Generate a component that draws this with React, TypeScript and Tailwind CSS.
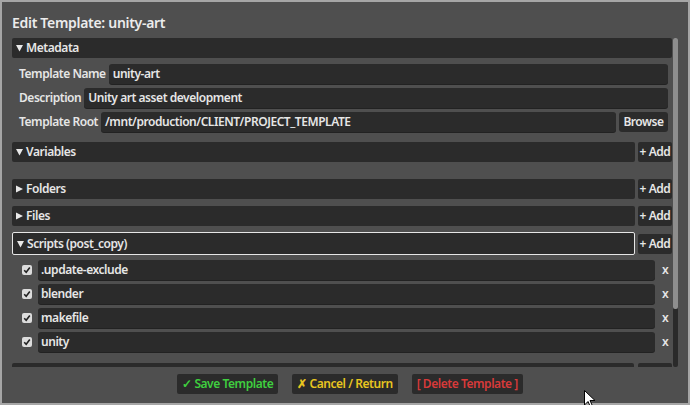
import React from "react";

const font = { fontFamily: '"Noto Sans", "Open Sans", sans-serif' };
const txt = "text-[12px] font-semibold tracking-[-0.45px] text-[#e6e6e6] whitespace-nowrap";

function Tri({ open }: { open: boolean }) {
  return (
    <svg width="7" height="8" viewBox="0 0 7 8" className="mr-[3px] ml-[1px]">
      {open ? <path d="M0 1 L7 1 L3.5 7.5 Z" fill="#e8e8e8" /> : <path d="M0 0.5 L7 4 L0 7.5 Z" fill="#e8e8e8" />}
    </svg>
  );
}

function Header({ open, label, selected }: { open: boolean; label: string; selected?: boolean }) {
  return (
    <div
      className={`flex-1 rounded-[2px] bg-[#2b2b2b] flex items-center pl-[3px] ${txt} ${
        selected ? "border border-[#e6e6e6] h-[23px]" : "h-[20px]"
      }`}
    >
      <Tri open={open} />
      {label}
    </div>
  );
}

function AddBtn() {
  return (
    <div className={`w-[34px] h-[20px] ml-[3px] rounded-[2px] bg-[#2b2b2b] flex items-center justify-center ${txt}`}>
      + Add
    </div>
  );
}

function Field({ label, value, browse }: { label: string; value: string; browse?: boolean }) {
  return (
    <div className="flex items-center h-[20px] pl-[7px] pr-[4px]">
      <span className={`${txt} mr-[3px]`}>{label}</span>
      <div className={`flex-1 h-[20px] rounded-[3px] bg-[#2b2b2b] shadow-[0_1px_0_#222] flex items-center pl-[4px] ${txt}`}>
        {value}
      </div>
      {browse && (
        <div className={`w-[49px] h-[20px] ml-[3px] rounded-[3px] bg-[#2b2b2b] flex items-center justify-center ${txt}`}>
          Browse
        </div>
      )}
    </div>
  );
}

function Item({ value, first }: { value: string; first?: boolean }) {
  return (
    <div className={`flex items-center h-[20px] ${first ? "mt-[5px]" : "mt-[4px]"}`}>
      <div className="w-[10px] h-[10px] ml-[10px] mr-[6px] rounded-[2px] bg-[#dcdcdc] flex items-center justify-center">
        <svg width="8" height="8" viewBox="0 0 8 8">
          <path d="M1.2 4.2 L3.2 6.2 L6.8 1.6" stroke="#222" strokeWidth="1.6" fill="none" />
        </svg>
      </div>
      <div className={`w-[617px] h-[20px] rounded-[3px] bg-[#2b2b2b] shadow-[0_1px_0_#222] flex items-center pl-[3px] ${txt}`}>
        {value}
      </div>
      <span className={`ml-[7px] ${txt}`}>x</span>
    </div>
  );
}

export default function App() {
  return (
    <div style={font} className="relative w-[690px] h-[405px] overflow-hidden bg-[#a6a6a6] p-[2px]">
      <div className="w-full h-full bg-[#4f4f4f] flex flex-col pl-[10px] pr-[8px]">
        <div className="h-[36px] flex items-center pt-[4px] text-[14px] font-semibold tracking-[-0.3px] text-[#ececec]">
          Edit Template: unity-art
        </div>
        <div className="flex h-[329px]">
          <div className="w-[660px] overflow-hidden flex flex-col">
            <div className="flex">
              <Header open label="Metadata" />
            </div>
            <div className="mt-[6px]">
              <Field label="Template Name" value="unity-art" />
            </div>
            <div className="mt-[4px]">
              <Field label="Description" value="Unity art asset development" />
            </div>
            <div className="mt-[4px]">
              <Field label="Template Root" value="/mnt/production/CLIENT/PROJECT_TEMPLATE" browse />
            </div>
            <div className="flex mt-[10px]">
              <Header open label="Variables" />
              <AddBtn />
            </div>
            <div className="flex mt-[17px]">
              <Header open={false} label="Folders" />
              <AddBtn />
            </div>
            <div className="flex mt-[7px]">
              <Header open={false} label="Files" />
              <AddBtn />
            </div>
            <div className="flex mt-[6px] items-center">
              <Header open label="Scripts (post_copy)" selected />
              <AddBtn />
            </div>
            <div>
              <Item value=".update-exclude" first />
              <Item value="blender" />
              <Item value="makefile" />
              <Item value="unity" />
            </div>
            <div className="flex mt-[11px]">
              <div className="flex-1 h-[20px] rounded-[2px] bg-[#2b2b2b]" />
              <div className="w-[34px] h-[20px] ml-[4px] rounded-[2px] bg-[#2b2b2b]" />
            </div>
          </div>
          <div className="w-[5px] ml-[1px] h-full rounded-[2px] bg-[#2a2a2a] flex flex-col">
            <div className="h-[271px] rounded-[2px] bg-[#8e8e8e]" />
          </div>
        </div>
        <div className="flex justify-center items-center h-[26px] mt-[4px] pl-[8px]">
          <div className="flex gap-[14px]">
            <div className={`h-[20px] px-[5px] rounded-[2px] bg-[#2b2b2b] flex items-center ${txt} !text-[#3fcf3f]`}>
              ✓ Save Template
            </div>
            <div className={`h-[20px] px-[5px] rounded-[2px] bg-[#2b2b2b] flex items-center ${txt} !text-[#e8c520]`}>
              ✗ Cancel / Return
            </div>
            <div className={`h-[20px] px-[5px] rounded-[2px] bg-[#2b2b2b] flex items-center ${txt} !text-[#d83a3a]`}>
              [ Delete Template ]
            </div>
          </div>
        </div>
      </div>
      <svg className="absolute left-[584px] top-[390px]" width="12" height="18" viewBox="0 0 12 18">
        <path d="M0.5 0.5 L0.5 15 L4 11.5 L6.5 17 L8.5 16 L6 10.5 L11 10.5 Z" fill="#fff" stroke="#000" strokeWidth="1" />
      </svg>
    </div>
  );
}
